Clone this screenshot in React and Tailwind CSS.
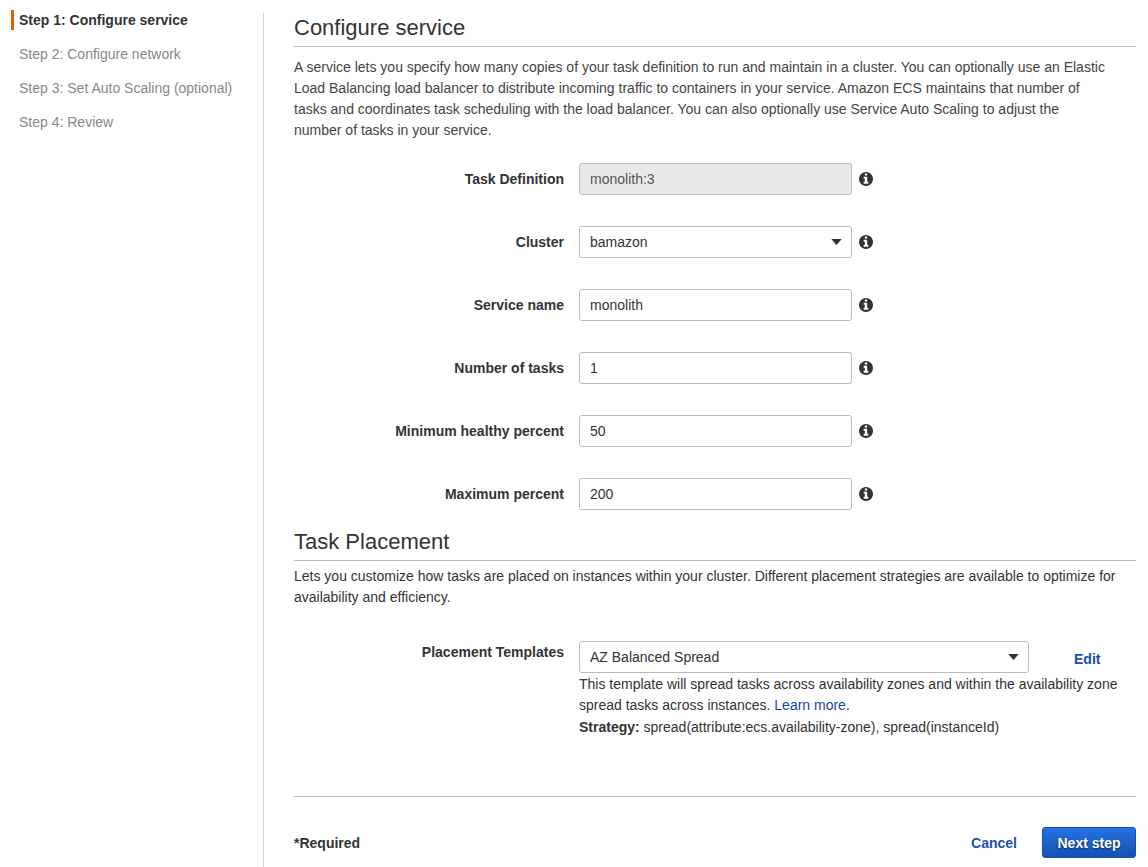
const steps = [
  "Step 1: Configure service",
  "Step 2: Configure network",
  "Step 3: Set Auto Scaling (optional)",
  "Step 4: Review",
];

const fields = [
  { id: "task-definition", label: "Task Definition", value: "monolith:3", disabled: true },
  { id: "cluster", label: "Cluster", value: "bamazon", select: true },
  { id: "service-name", label: "Service name", value: "monolith" },
  { id: "task-count", label: "Number of tasks", value: "1" },
  { id: "min-healthy", label: "Minimum healthy percent", value: "50" },
  { id: "max-percent", label: "Maximum percent", value: "200" },
];

const control =
  "h-8 w-full rounded-[3px] border border-[#bbb] bg-white px-[10px] text-[#333] disabled:bg-[#e9e9e9] disabled:text-[#555]";

function InfoIcon() {
  return (
    <svg width="14" height="14" viewBox="128 128 1536 1536" fill="#333" aria-hidden="true">
      <path d="M1152 1376v-160q0-14-9-23t-23-9h-96v-512q0-14-9-23t-23-9h-320q-14 0-23 9t-9 23v160q0 14 9 23t23 9h96v320h-96q-14 0-23 9t-9 23v160q0 14 9 23t23 9h448q14 0 23-9t9-23zM1024 480v-160q0-14-9-23t-23-9h-192q-14 0-23 9t-9 23v160q0 14 9 23t23 9h192q14 0 23-9t9-23zM1664 896q0 209-103 385.5t-279.5 279.5-385.5 103-385.5-103-279.5-279.5-103-385.5 103-385.5 279.5-279.5 385.5-103 385.5 103 279.5 279.5 103 385.5z" />
    </svg>
  );
}

function Select({ id, value }) {
  return (
    <div className="relative w-full">
      <select id={id} defaultValue={value} className={`${control} appearance-none`}>
        <option>{value}</option>
      </select>
      <svg
        className="pointer-events-none absolute top-[13px] right-[10px]"
        width="11"
        height="6"
        viewBox="0 0 11 6"
        aria-hidden="true"
      >
        <path d="M0.3 0h10.4L6 5.4q-.5.5-1 0z" fill="#333" />
      </svg>
    </div>
  );
}

function Section({ title, children }) {
  return (
    <>
      <h2 className="border-b border-[#bbb] pb-1 text-[22px] leading-[28px] text-[#333]">{title}</h2>
      {children}
    </>
  );
}

export default function App() {
  return (
    <div className="flex min-h-screen bg-white pr-3 font-['Liberation_Sans',Arial,sans-serif] text-[14px] leading-[21px] text-[#333]">
      <nav aria-label="Steps" className="w-[263px] shrink-0 pt-[10px] pl-[11px]">
        <ol className="flex flex-col gap-[14px] leading-5">
          {steps.map((step, i) => (
            <li
              key={step}
              aria-current={i === 0 ? "step" : undefined}
              className={
                i === 0
                  ? "border-l-3 border-[#d5640d] pl-[5px] font-bold"
                  : "border-l-3 border-transparent pl-[5px] text-[#888]"
              }
            >
              {step}
            </li>
          ))}
        </ol>
      </nav>

      <main className="mt-[13px] min-w-0 flex-1 border-l border-[#d5d5d5] pt-px pb-[9px] pl-[30px]">
        <form onSubmit={(e) => e.preventDefault()}>
          <Section title="Configure service">
            <p className="mt-[10px] pr-7 text-[#444]">
              A service lets you specify how many copies of your task definition to run and maintain in a
              cluster. You can optionally use an Elastic Load Balancing load balancer to distribute incoming
              traffic to containers in your service. Amazon ECS maintains that number of tasks and coordinates
              task scheduling with the load balancer. You can also optionally use Service Auto Scaling to
              adjust the number of tasks in your service.
            </p>
            <div className="mt-[22px] flex flex-col gap-[31px]">
              {fields.map((f) => (
                <div key={f.id} className="flex items-center">
                  <label htmlFor={f.id} className="w-[270px] shrink-0 text-right font-bold">
                    {f.label}
                  </label>
                  <div className="ml-[15px] w-[273px]">
                    {f.select ? (
                      <Select id={f.id} value={f.value} />
                    ) : (
                      <input
                        id={f.id}
                        type="text"
                        defaultValue={f.value}
                        disabled={f.disabled}
                        className={`block ${control}`}
                      />
                    )}
                  </div>
                  <button type="button" aria-label={`About ${f.label}`} className="ml-[7px] pb-px">
                    <InfoIcon />
                  </button>
                </div>
              ))}
            </div>
          </Section>

          <div className="mt-[18px]">
            <Section title="Task Placement">
              <p className="mt-[5px]">
                Lets you customize how tasks are placed on instances within your cluster. Different placement
                strategies are available to optimize for availability and efficiency.
              </p>
              <div className="mt-[33px] flex items-start">
                <label htmlFor="placement" className="w-[270px] shrink-0 pt-px text-right font-bold">
                  Placement Templates
                </label>
                <div className="ml-[15px] min-w-0 flex-1">
                  <div className="flex items-center">
                    <div className="w-[450px]">
                      <Select id="placement" value="AZ Balanced Spread" />
                    </div>
                    <a href="#edit" className="ml-[45px] pt-1 font-bold text-[#1a4fae]">
                      Edit
                    </a>
                  </div>
                  <p className="mt-px">
                    This template will spread tasks across availability zones and within the availability zone
                    spread tasks across instances.{" "}
                    <a href="#learn-more" className="text-[#1a3fae]">
                      Learn more
                    </a>
                    .
                  </p>
                  <p className="mt-px">
                    <b>Strategy:</b> spread(attribute:ecs.availability-zone), spread(instanceId)
                  </p>
                </div>
              </div>
            </Section>
          </div>

          <div className="mt-[58px] flex items-center border-t border-[#bbb] pt-[30px]">
            <span className="pt-px font-bold">*Required</span>
            <a href="#cancel" className="ml-auto pt-px font-bold text-[#1a4fae]">
              Cancel
            </a>
            <button
              type="submit"
              className="ml-[25px] h-[31px] min-w-[94px] rounded-[3px] border border-[#1a4fa8] bg-linear-to-b from-[#2473e4] to-[#1552b2] px-[14px] pt-px font-bold text-white text-shadow-[0_1px_2px_rgb(0_0_0/0.6)]"
            >
              Next step
            </button>
          </div>
        </form>
      </main>
    </div>
  );
}
